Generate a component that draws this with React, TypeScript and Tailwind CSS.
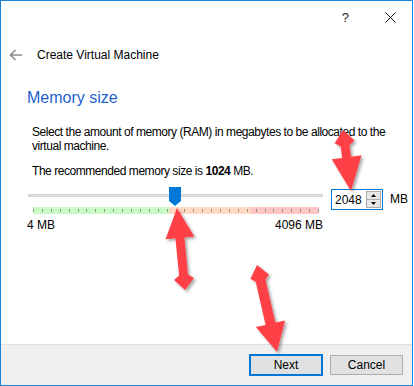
import React from 'react';

type Pt = [number, number];

// double-headed annotation arrow: small head at (x1,y1), big head at (x2,y2)
const arrowPoints = (x1: number, y1: number, x2: number, y2: number, headLen = 30, headW = 30, shaft = 9, tailLen = 10, tailW = 18): string => {
  const dx = x2 - x1;
  const dy = y2 - y1;
  const len = Math.hypot(dx, dy);
  const ux = dx / len;
  const uy = dy / len;
  const px = -uy;
  const py = ux;
  const P = (t: number, s: number): Pt => [x1 + ux * t + px * s, y1 + uy * t + py * s];
  const pts: Pt[] = [
    P(0, 0),
    P(tailLen, tailW / 2),
    P(tailLen + 4, shaft / 2),
    P(len - headLen, shaft / 2),
    P(len - headLen, headW / 2),
    P(len, 0),
    P(len - headLen, -headW / 2),
    P(len - headLen, -shaft / 2),
    P(tailLen + 4, -shaft / 2),
    P(tailLen, -tailW / 2),
  ];
  return pts.map((p) => `${p[0].toFixed(1)},${p[1].toFixed(1)}`).join(' ');
};

const Annotations = () => (
  <svg className="absolute left-0 top-0 pointer-events-none" width={414} height={386}>
    <defs>
      <filter id="shadow" x="-20%" y="-20%" width="140%" height="140%">
        <feDropShadow dx="2" dy="2" stdDeviation="1.5" floodColor="#000" floodOpacity="0.35" />
      </filter>
    </defs>
    <g fill="#ff4146" filter="url(#shadow)">
      <polygon points={arrowPoints(343, 130, 351, 191, 34, 30, 9, 12, 20)} />
      <polygon points={arrowPoints(185, 290, 177, 208, 30, 29, 9, 11, 20)} />
      <polygon points={arrowPoints(257, 265, 277, 352, 29, 30, 10, 12, 19)} />
    </g>
  </svg>
);

const ticks = Array.from({ length: 33 }, (_, i) => i);

const MemorySlider = () => (
  <div className="w-[295px] shrink-0 flex flex-col">
    <div className="relative h-[21px]">
      <div className="absolute left-0 right-0 top-[8px] h-[3px] bg-[#e2e2e2] border-y border-[#d3d3d3]" />
      <svg className="absolute left-[141px] top-[1px]" width={12} height={20}>
        <polygon points="0,0 12,0 12,14 6,19 0,14" fill="#0078d7" />
      </svg>
    </div>
    <div className="relative ml-[5px] mr-[4px] h-[7px] flex">
      <div className="w-[136px] bg-[#c9fbc5]" />
      <div className="w-[82px] bg-[#ffd8c6]" />
      <div className="flex-1 bg-[#ffc6c6]" />
      <div className="absolute inset-0 flex justify-between items-center">
        {ticks.map((t) => (
          <div key={t} className="w-px h-[3px] bg-[#8f8f8f]" />
        ))}
      </div>
    </div>
    <div className="mt-[4px] -ml-px flex justify-between leading-[14px]">
      <span>4 MB</span>
      <span>4096 MB</span>
    </div>
  </div>
);

const SpinBox = () => (
  <div className="mt-[3px] w-[52px] h-[21px] shrink-0 border border-[#0078d7] flex items-center">
    <span className="pl-[3px] flex-1 leading-[14px]">2048</span>
    <div className="w-[15px] h-[17px] mr-px border border-[#acacac] bg-[#e6e6e6] flex flex-col">
      <div className="flex-1 flex items-center justify-center border-b border-[#acacac]">
        <svg width={5} height={3}><polygon points="2.5,0 5,3 0,3" fill="#000" /></svg>
      </div>
      <div className="flex-1 flex items-center justify-center">
        <svg width={5} height={3}><polygon points="0,0 5,0 2.5,3" fill="#000" /></svg>
      </div>
    </div>
  </div>
);

export default function App() {
  return (
    <div className="relative w-[414px] h-[386px] bg-white text-[12px] text-black font-['Liberation_Sans',Arial,sans-serif]">
      <div className="w-[413px] h-[386px] border border-[#1883d7] flex flex-col">
        {/* title bar */}
        <div className="h-[32px] flex items-center justify-end">
          <span className="text-[13px] leading-none mr-[36px] text-[#222]">?</span>
          <svg className="mr-[16px]" width={11} height={11}>
            <path d="M0.5 0.5 L10.5 10.5 M10.5 0.5 L0.5 10.5" stroke="#111" strokeWidth="1" />
          </svg>
        </div>

        {/* wizard header */}
        <div className="h-[44px] flex items-center pl-[8px]">
          <svg width={14} height={12}>
            <path d="M13 6 H1.5 M6.5 1 L1.5 6 L6.5 11" stroke="#8a8a8a" strokeWidth="1.6" fill="none" />
          </svg>
          <span className="ml-[14px] leading-[14px]">Create Virtual Machine</span>
        </div>

        <div className="pl-[26px] flex flex-col">
          <div className="mt-[11px] text-[16px] leading-[20px] text-[#1e5fd0]">Memory size</div>
          <p className="mt-[17px] ml-[5px] mr-[8px] leading-[14px] tracking-[-0.45px]">
            Select the amount of memory (RAM) in megabytes to be allocated to the virtual machine.
          </p>
          <p className="mt-[11px] ml-[5px] leading-[14px] tracking-[-0.45px]">
            The recommended memory size is <b>1024</b> MB.
          </p>
          <div className="mt-[8px] ml-px flex items-start">
            <MemorySlider />
            <div className="ml-[8px] shrink-0">
              <SpinBox />
            </div>
            <span className="ml-[7px] mt-[6px] leading-[14px] shrink-0">MB</span>
          </div>
        </div>

        {/* footer */}
        <div className="mt-auto h-[41px] bg-[#f0f0f0] border-t border-[#dfdfdf] flex items-center justify-end gap-[7px] pr-[9px]">
          <button className="w-[74px] h-[22px] border-2 border-[#0078d7] bg-[#e1e1e1] leading-[14px]">Next</button>
          <button className="w-[73px] h-[20px] border border-[#adadad] bg-[#e1e1e1] leading-[14px]">Cancel</button>
        </div>
      </div>
      <Annotations />
    </div>
  );
}
